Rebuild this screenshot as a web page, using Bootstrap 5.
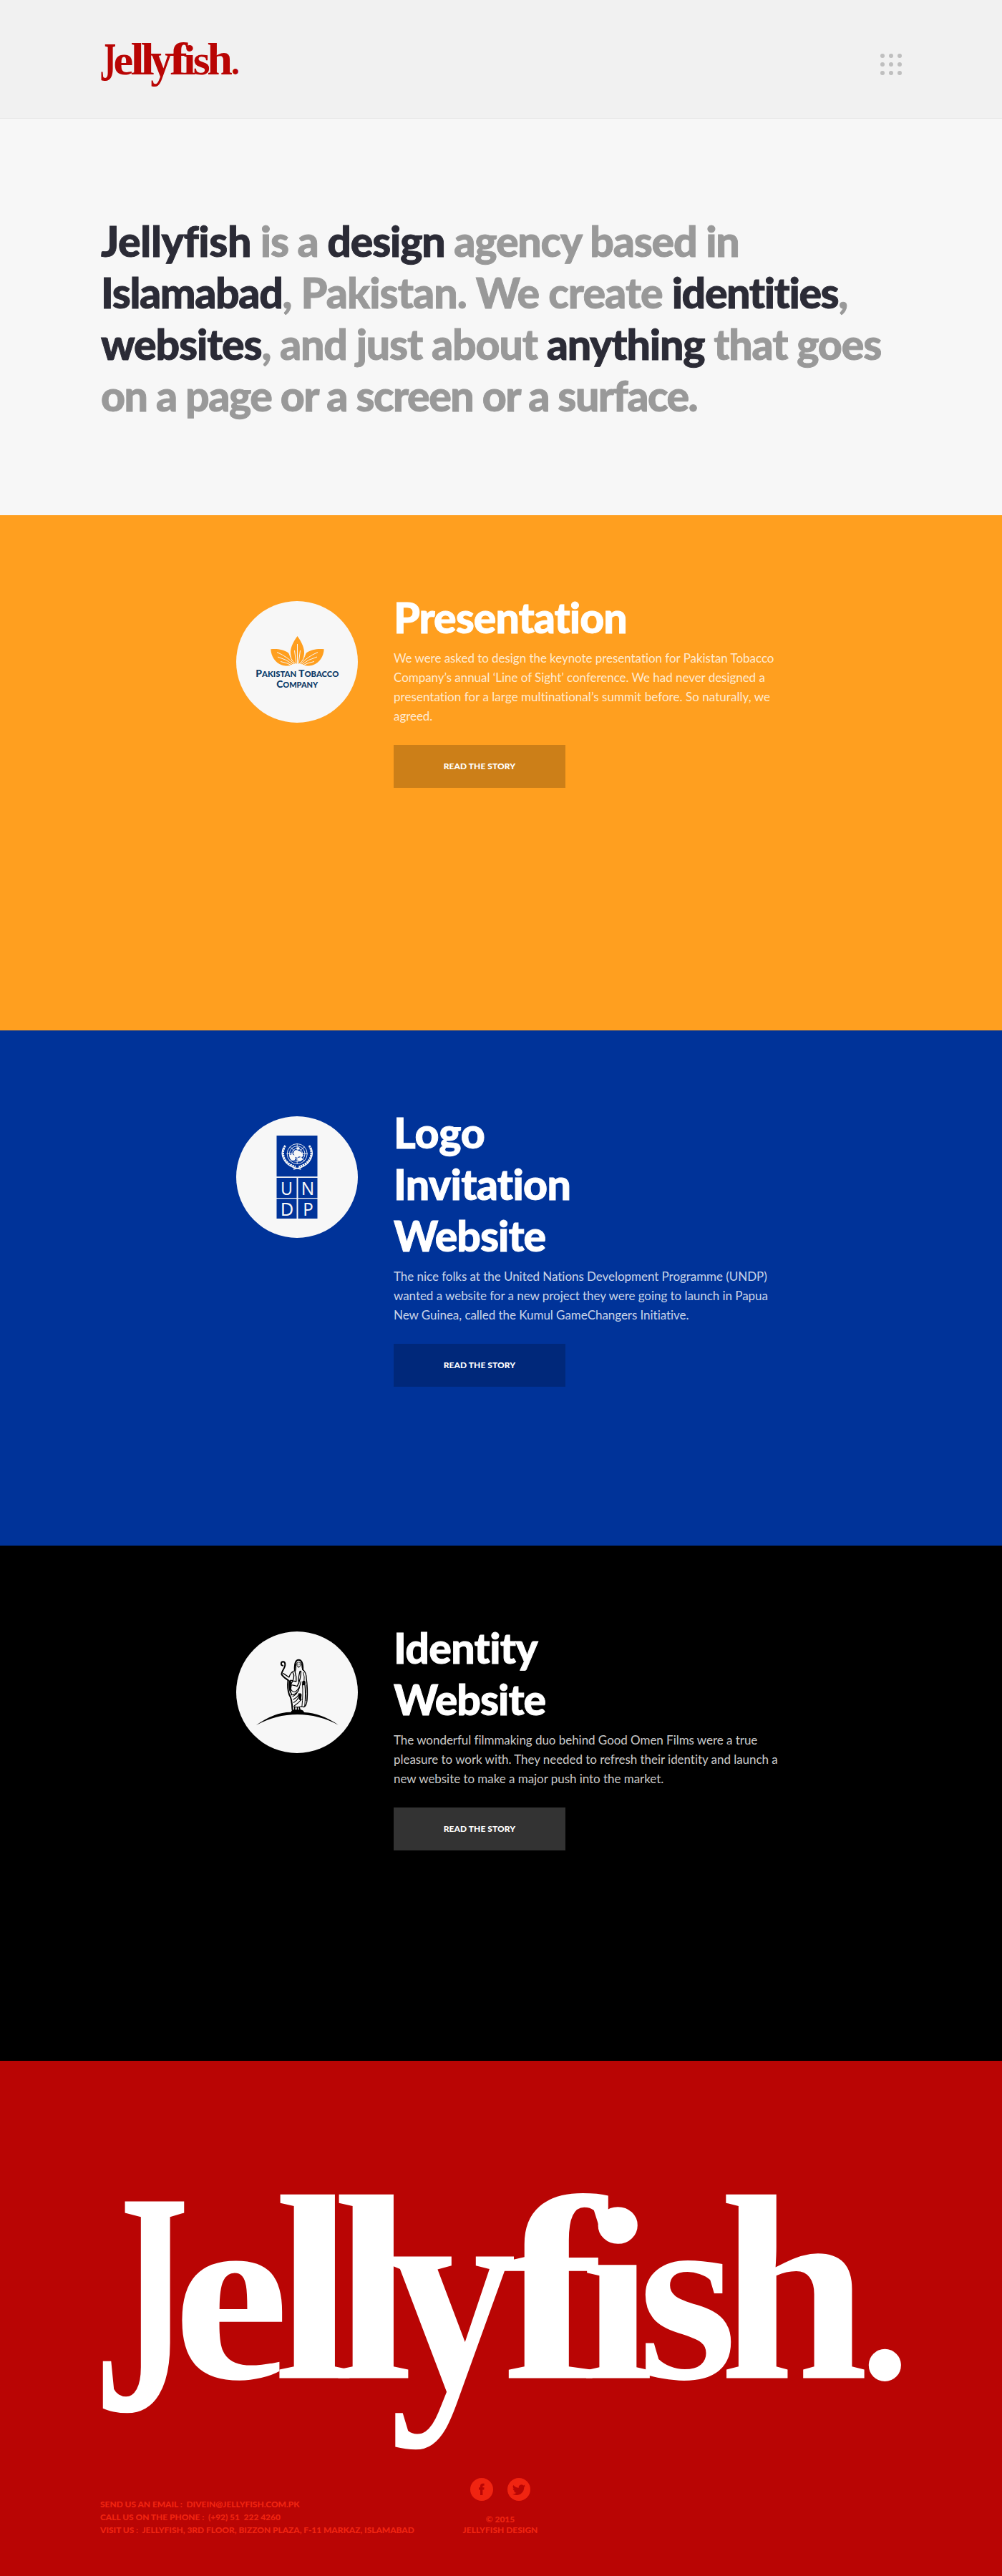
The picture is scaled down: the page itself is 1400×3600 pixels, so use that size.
<!DOCTYPE html>
<html lang="en">
<head>
<meta charset="utf-8">
<title>Jellyfish.</title>
<meta name="viewport" content="width=device-width, initial-scale=1">
<link href="https://cdn.jsdelivr.net/npm/bootstrap@5.3.0/dist/css/bootstrap.min.css" rel="stylesheet">
<style>
body{font-family:Lato,"Liberation Sans",sans-serif;background:#f7f7f7;color:#2b2b36}
.wordmark text{font-family:"Liberation Serif",serif;font-weight:700;font-size:1000px}
.wordmark{display:block;overflow:visible}
.site-head{height:166px;background:#f1f1f1;border-bottom:1px solid #e8e8e8;padding:60px 140px 0 141px}
.site-head .wordmark{width:192px;height:60px;fill:#b90504}
.menu-dots{width:30px;height:30px;margin-top:15px}
.intro{height:554px;padding:135px 0 0 141px}
.intro h1,.story h2{font-size:59px;line-height:72px;font-weight:900;white-space:nowrap;margin:0;letter-spacing:-1px;-webkit-text-stroke:.9px currentColor}
.intro h1{color:#999}
.intro b{font-weight:900;color:#2b2b36}
.story{height:720px;padding:105px 0 0 329.5px;gap:50.5px}
.story p{font-size:17px;line-height:27px;white-space:nowrap;margin:7px 0 27px;color:rgba(255,255,255,.8);letter-spacing:-.045px}
.story h2{color:#fff;padding-top:1.5px}
.logo-disc{width:170px;height:170px;background:#f7f7f7;border-radius:50%;margin-top:15px}
.btn-story{width:240px;height:60px;border-radius:0;font-size:12px;font-weight:900;color:#fff;letter-spacing:.07px;border:0;background:rgba(0,0,0,.2)}
.st-orange{background:#ff9f1f}.st-blue{background:#039}.st-black{background:#000}
.st-black .btn-story{background:#333}
.site-foot{height:720px;background:#b90504;padding:185px 140px 0 141px;color:#f02411;font-size:12px;font-weight:900}
.site-foot .wordmark{width:1119px;height:350px;fill:#fff}
.foot-row{height:85px;margin-top:48px}
.foot-contact{line-height:18px;white-space:pre;width:506px;margin-top:28px;margin-left:-1px;letter-spacing:-.04px}
.foot-mid{width:106px;line-height:15px;white-space:nowrap}
.foot-mid .d-flex{gap:20px;margin-bottom:18px}
.t1{letter-spacing:-1.23px}.t1 b:first-child{letter-spacing:-.42px}.t2{letter-spacing:-.95px}.t2 b{letter-spacing:-1.4px}.t3{letter-spacing:-1.17px}.t4{letter-spacing:-1.53px}
.p-wide{letter-spacing:.046px}
.h-logo{letter-spacing:-.1px}.h-tight{letter-spacing:-.7px}
</style>
</head>
<body>
<header class="site-head d-flex justify-content-between align-items-start">
  <a href="#" aria-label="Jellyfish"><svg class="wordmark" viewBox="0 0 1119 350"><text transform="matrix(.265 0 0 .445 -9 303)">J</text><text transform="matrix(.364 0 0 .349 101 258.5)">e</text><text transform="matrix(.406 0 0 .37 241.5 258.5)">l</text><text transform="matrix(.406 0 0 .37 323.5 258.5)">l</text><text transform="matrix(.355 0 0 .4 403 272)">y</text><text transform="matrix(.44 0 0 .367 558 258.5)">f</text><text transform="matrix(.368 0 0 .345 670 258.5)">i</text><text transform="matrix(.357 0 0 .349 750 258.5)">s</text><text transform="matrix(.3745 0 0 .37 864 258.5)">h</text><text transform="matrix(.278 0 0 .278 1060.6 259)">.</text></svg></a>
  <svg class="menu-dots" viewBox="0 0 30 30" fill="#bfbfbf"><circle cx="3" cy="3" r="3"/><circle cx="15" cy="3" r="3"/><circle cx="27" cy="3" r="3"/><circle cx="3" cy="15" r="3"/><circle cx="15" cy="15" r="3"/><circle cx="27" cy="15" r="3"/><circle cx="3" cy="27" r="3"/><circle cx="15" cy="27" r="3"/><circle cx="27" cy="27" r="3"/></svg>
</header>
<main>
<section class="intro">
  <h1><span class="t1"><b>Jellyfish</b> is a <b>design</b> agency based in</span><br><span class="t2"><b>Islamabad</b>, Pakistan. We create <b>identities</b>,</span><br><span class="t3"><b>websites</b>, and just about <b>anything</b> that goes</span><br><span class="t4">on a page or a screen or a surface.</span></h1>
</section>

<section class="story st-orange d-flex align-items-start">
  <div class="logo-disc flex-shrink-0">
    <svg width="170" height="170" viewBox="0 0 170 170">
      <g fill="#ff9f1f">
        <path d="M85.500 49C79 58 75.500 66 76 73C76.400 80 80 85 85 90.500C91 85 94.600 80 95 73C95.400 66 92 58 85.500 49Z"/>
        <path d="M48.300 67.200C49 77 54 86 64 89.500C69 91 73 90.500 75 90L84 88C78 81 75 76 73 72.500C66 67.500 58 66.500 48.300 67.200Z"/>
        <path d="M122.700 67.200C122 77 117 86 107 89.500C102 91 98 90.500 96 90L87 88C93 81 96 76 98 72.500C105 67.500 113 66.500 122.700 67.200Z"/>
      </g>
      <g stroke="#f7f7f7" fill="none" stroke-width="1">
        <path d="M85.500 88V60M84 88L81.500 69M87 88L89.500 69M83 88Q75.500 82 74 71M88 88Q95.500 82 97 71"/>
        <path d="M82 89Q72 78 57 71.500M81 90Q70 81 58 78M80 91Q71 86 62 84.500M89 89Q99 78 114 71.500M90 90Q101 81 113 78M91 91Q100 86 109 84.500"/>
      </g>
      <ellipse cx="85.500" cy="92.500" rx="11.500" ry="5" fill="#f7f7f7"/>
      <g fill="#0b3a68" font-family="Lato, sans-serif" font-weight="900" text-anchor="middle">
        <text x="85.300" y="106.300" font-size="13" textLength="116" lengthAdjust="spacingAndGlyphs">P<tspan font-size="10.500">AKISTAN</tspan> T<tspan font-size="10.500">OBACCO</tspan></text>
        <text x="85.300" y="121" font-size="13" textLength="58" lengthAdjust="spacingAndGlyphs">C<tspan font-size="10.500">OMPANY</tspan></text>
      </g>
    </svg>
  </div>
  <div>
    <h2>Presentation</h2>
    <p>We were asked to design the keynote presentation for Pakistan Tobacco<br>Company’s annual ‘Line of Sight’ conference. We had never designed a<br><span class="p-wide">presentation for a large multinational’s summit before. So naturally, we</span><br>agreed.</p>
    <a href="#" class="btn btn-story d-flex align-items-center justify-content-center">READ THE STORY</a>
  </div>
</section>

<section class="story st-blue d-flex align-items-start">
  <div class="logo-disc flex-shrink-0">
    <svg width="170" height="170" viewBox="0 0 170 170">
      <path fill="#039" d="M56.500 27h57v57.300h-57zM56.500 86h28v28h-28zM86.500 86h27v28h-27zM56.500 115.200h28V143h-28zM86.500 115.200h27V143h-27z"/>
      <g fill="none" stroke="#f7f7f7" stroke-width=".9">
        <circle cx="85.200" cy="52.500" r="14"/><circle cx="85.200" cy="52.500" r="10.800"/><circle cx="85.200" cy="52.500" r="7.500"/><circle cx="85.200" cy="52.500" r="4"/>
        <path d="M85.200 38v29M70.700 52.500h29M75 42.300l20.400 20.400M95.400 42.300L75 62.700"/>
      </g>
      <path fill="#f7f7f7" d="M74 54l5-1 4 3-1 5-4 1-3-3zM80 50l3-3 4 1 4 2 3 5-2 2-4-1-3 2-3-2zM86 58l5-1 2 3-3 3-4-1zM84 44l4-1 1 3-3 1z"/>
      <g fill="none" stroke="#f7f7f7" stroke-width="2.800" stroke-dasharray="2.600 .8"><path d="M68.500 41C62 52 66 66 83 70.500M102 41C108.500 52 104.500 66 87.500 70.500"/></g>
      <g fill="none" stroke="#f7f7f7" stroke-width="1.400"><path d="M66 43.500C61 54 67 67 80 71.500L90.500 74M104.500 43.500C109.500 54 103.500 67 90.500 71.500L80 74"/></g>
      <g fill="#f7f7f7" font-family="'Noto Sans', sans-serif" font-size="26" text-anchor="middle">
        <text x="70.500" y="109.500" textLength="17" lengthAdjust="spacingAndGlyphs">U</text><text x="100" y="109.500" textLength="18.500" lengthAdjust="spacingAndGlyphs">N</text>
        <text x="71" y="138.500" textLength="18.500" lengthAdjust="spacingAndGlyphs">D</text><text x="100.500" y="138.500" textLength="14.500" lengthAdjust="spacingAndGlyphs">P</text>
      </g>
    </svg>
  </div>
  <div>
    <h2><span class="h-logo">Logo</span><br><span class="h-tight">Invitation</span><br>Website</h2>
    <p>The nice folks at the United Nations Development Programme (UNDP)<br>wanted a website for a new project they were going to launch in Papua<br>New Guinea, called the Kumul GameChangers Initiative.</p>
    <a href="#" class="btn btn-story d-flex align-items-center justify-content-center">READ THE STORY</a>
  </div>
</section>

<section class="story st-black d-flex align-items-start">
  <div class="logo-disc flex-shrink-0">
    <svg width="170" height="170" viewBox="0 0 170 170">
      <g transform="translate(-9.500 -20) scale(.33333)">
        <path d="M112 453Q190 397 258 398Q262 388 272 388H300Q310 390 314 399Q385 402 457 452Q375 408 285 408Q195 408 112 453Z"/>
        <g fill="none" stroke="#000" stroke-width="5" stroke-linecap="round" stroke-linejoin="round">
          <path d="M224 203C215 203 214 188 225 187C236 187 235 203 230 212C225 222 218 232 219 240C224 250 236 257 247 265" stroke-width="6"/>
          <path d="M226 236L250 252Q258 228 275 224" stroke-width="4"/>
          <path d="M274 222Q272 178 291 179Q309 180 308 220" stroke-width="6"/>
          <path d="M282 192Q291 184 300 192M283 192Q281 207 290 211Q300 208 299 192M285 197h4M293 197h4M289 205h4" stroke-width="2.500"/>
          <path d="M279 196Q281 218 276 230M303 196Q303 215 309 224" stroke-width="3"/>
          <path d="M308 220Q323 232 323 260Q329 300 326 345Q324 372 312 377" stroke-width="4"/>
          <path d="M246 266Q242 300 251 325Q262 340 264 388" stroke-width="6"/>
          <path d="M266 232Q278 250 256 285Q252 310 262 325M275 228Q282 250 280 270L260 265M300 226Q300 262 284 290Q262 282 258 286M296 226Q286 262 292 276" stroke-width="4"/>
          <path d="M256 300Q266 318 278 312Q294 300 300 270M258 326Q275 328 290 308M266 332Q284 325 294 295M268 345Q288 335 292 320M270 358Q290 345 291 330M272 372Q290 360 302 345" stroke-width="3.500"/>
          <path d="M310 232Q316 250 313 270Q307 285 316 282Q320 320 316 370M306 280Q310 320 304 376M322 285Q320 320 322 350M268 376Q285 380 304 374Q313 380 318 368" stroke-width="3"/>
          <path d="M274 376L273 392M285 378V390M293 378L296 390" stroke-width="5"/>
        </g>
        <ellipse cx="312" cy="276" rx="7" ry="10"/>
        <path d="M290 325Q297 312 303 325L300 352L292 345ZM250 266L258 262L261 290L255 318Q246 300 250 266Z"/>
      </g>
    </svg>
  </div>
  <div>
    <h2><span class="h-tight">Identity</span><br>Website</h2>
    <p>The wonderful filmmaking duo behind Good Omen Films were a true<br>pleasure to work with. They needed to refresh their identity and launch a<br>new website to make a major push into the market.</p>
    <a href="#" class="btn btn-story d-flex align-items-center justify-content-center">READ THE STORY</a>
  </div>
</section>
</main>
<footer class="site-foot">
  <svg class="wordmark" viewBox="0 0 1119 350"><text transform="matrix(.265 0 0 .445 -9 303)">J</text><text transform="matrix(.364 0 0 .349 101 258.5)">e</text><text transform="matrix(.406 0 0 .37 241.5 258.5)">l</text><text transform="matrix(.406 0 0 .37 323.5 258.5)">l</text><text transform="matrix(.355 0 0 .4 403 272)">y</text><text transform="matrix(.44 0 0 .367 558 258.5)">f</text><text transform="matrix(.368 0 0 .345 670 258.5)">i</text><text transform="matrix(.357 0 0 .349 750 258.5)">s</text><text transform="matrix(.3745 0 0 .37 864 258.5)">h</text><text transform="matrix(.278 0 0 .278 1060.6 259)">.</text></svg>
  <div class="foot-row d-flex align-items-start">
    <div class="foot-contact"><div>SEND US AN EMAIL :  DIVEIN@JELLYFISH.COM.PK</div><div>CALL US ON THE PHONE :  (+92) 51  222 4260</div><div>VISIT US :  JELLYFISH, 3RD FLOOR, BIZZON PLAZA, F-11 MARKAZ, ISLAMABAD</div></div>
    <div class="foot-mid text-center">
      <div class="d-flex justify-content-center">
        <svg width="32" height="32" viewBox="0 0 32 32"><circle cx="16" cy="16" r="16" fill="#f02411"/><path fill="#b90504" d="M14 24v-7.500h-2v-3.200h2v-1.800c0-2.400 1.300-3.700 3.700-3.700h1.900v3h-1.300c-.7 0-.9.300-.9 1v1.500h2.200l-.3 3.200h-1.900V24z"/></svg>
        <svg width="32" height="32" viewBox="0 0 32 32"><circle cx="16" cy="16" r="16" fill="#f02411"/><path fill="#b90504" transform="translate(7 7) scale(1.130)" d="M5.026 15c6.038 0 9.341-5.003 9.341-9.334 0-.14 0-.282-.006-.422A6.700 6.700 0 0 0 16 3.542a6.700 6.700 0 0 1-1.889.518 3.300 3.300 0 0 0 1.447-1.817 6.500 6.500 0 0 1-2.087.793A3.286 3.286 0 0 0 7.875 6.030a9.320 9.320 0 0 1-6.767-3.429 3.290 3.290 0 0 0 1.018 4.382A3.300 3.300 0 0 1 .64 6.575v.045a3.290 3.290 0 0 0 2.632 3.218 3.200 3.200 0 0 1-.865.115 3 3 0 0 1-.614-.057 3.280 3.280 0 0 0 3.067 2.277A6.600 6.600 0 0 1 .78 13.580a6 6 0 0 1-.78-.045A9.340 9.340 0 0 0 5.026 15"/></svg>
      </div>
      <div>© 2015</div><div>JELLYFISH DESIGN</div>
    </div>
  </div>
</footer>
<script src="https://cdn.jsdelivr.net/npm/bootstrap@5.3.0/dist/js/bootstrap.bundle.min.js"></script>
</body>
</html>
